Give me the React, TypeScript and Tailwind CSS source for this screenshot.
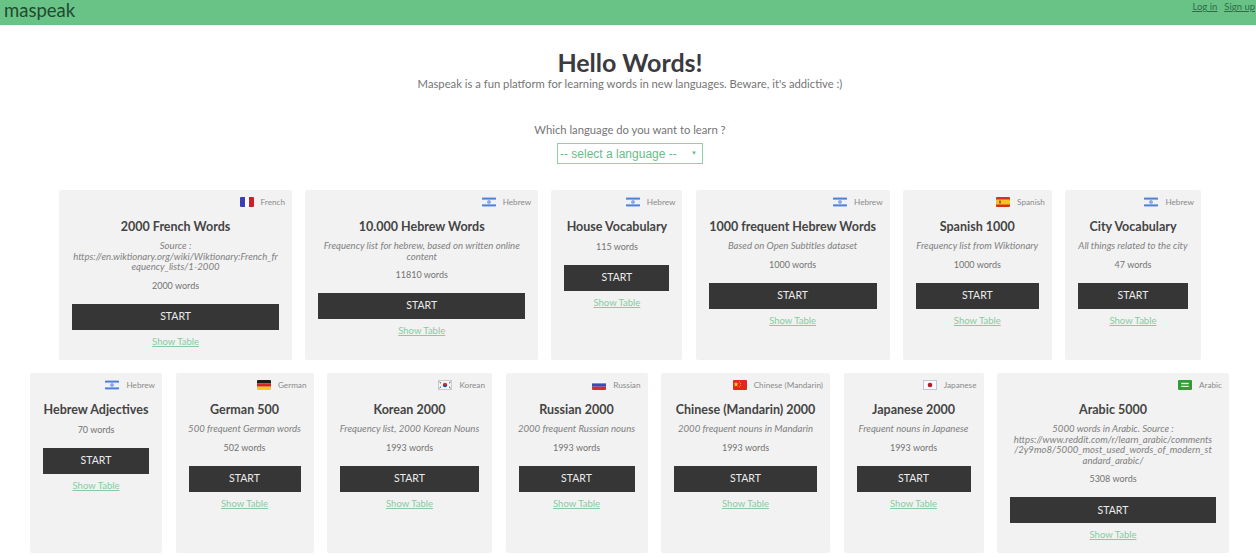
import React from "react";

type FlagKind = "fr" | "il" | "es" | "de" | "kr" | "ru" | "cn" | "jp" | "sa";

function Flag({ kind }: { kind: FlagKind }) {
  const inner: Record<FlagKind, React.ReactNode> = {
    fr: (<><rect width="14" height="10" fill="#fff" /><rect width="5" height="10" fill="#3b3fb5" /><rect x="9" width="5" height="10" fill="#c8202c" /></>),
    il: (<><rect width="14" height="10" fill="#eef1f8" /><rect y="0.6" width="14" height="2" fill="#4f7fd6" /><rect y="7.4" width="14" height="2" fill="#4f7fd6" /><path d="M7 3.2 8.5 6H5.5ZM7 6.8 5.5 4H8.5Z" fill="none" stroke="#4f7fd6" strokeWidth="0.5" /></>),
    es: (<><rect width="14" height="10" fill="#d5301f" /><rect y="2.5" width="14" height="5" fill="#f6c21c" /><rect x="3" y="3.6" width="2" height="2.8" fill="#b5521f" /></>),
    de: (<><rect width="14" height="3.4" fill="#1c1c1c" /><rect y="3.4" width="14" height="3.3" fill="#d8231f" /><rect y="6.7" width="14" height="3.3" fill="#f5c518" /></>),
    kr: (<><rect x="0.25" y="0.25" width="13.5" height="9.5" fill="#f5f5f5" stroke="#9aa3b0" strokeWidth="0.5" /><path d="M4.8 5a2.2 2.2 0 0 1 4.4 0Z" fill="#cd2e3a" /><path d="M4.8 5a2.2 2.2 0 0 0 4.4 0Z" fill="#1f4fa3" /><path d="M1.5 2 3 3.2M1.5 8 3 6.8M12.5 2 11 3.2M12.5 8 11 6.8" stroke="#333" strokeWidth="0.9" /></>),
    ru: (<><rect width="14" height="3.4" fill="#f4f4f8" /><rect y="3.4" width="14" height="3.3" fill="#3650b0" /><rect y="6.7" width="14" height="3.3" fill="#d3302c" /></>),
    cn: (<><rect width="14" height="10" fill="#e4261c" /><path d="M3 1.6 3.7 3.6 5.6 3.6 4 4.8 4.6 6.7 3 5.5 1.4 6.7 2 4.8 0.4 3.6 2.3 3.6Z" fill="#f7d21e" /><circle cx="6.6" cy="1.8" r="0.5" fill="#f7d21e" /><circle cx="7.4" cy="3.4" r="0.5" fill="#f7d21e" /><circle cx="7.4" cy="5.2" r="0.5" fill="#f7d21e" /><circle cx="6.6" cy="6.8" r="0.5" fill="#f7d21e" /></>),
    jp: (<><rect x="0.25" y="0.25" width="13.5" height="9.5" fill="#fafafa" stroke="#8d9ab5" strokeWidth="0.5" /><circle cx="7" cy="5" r="2.3" fill="#c3162c" /></>),
    sa: (<><rect width="14" height="10" fill="#2f9e36" /><rect x="3.2" y="2.8" width="7.6" height="1.4" fill="#e4f2e2" /><rect x="3.2" y="5.8" width="7.6" height="1.2" fill="#e4f2e2" /></>),
  };
  return (
    <svg width="14" height="10" viewBox="0 0 14 10" className="block rounded-[1px] shrink-0">
      {inner[kind]}
    </svg>
  );
}

type Card = { w: string; flag: FlagKind; lang: string; title: string; desc: string[]; words: string };

const rowOne: Card[] = [
  { w: "w-[233px]", flag: "fr", lang: "French", title: "2000 French Words", desc: ["Source :", "https://en.wiktionary.org/wiki/Wiktionary:French_fr", "equency_lists/1-2000"], words: "2000 words" },
  { w: "w-[233px]", flag: "il", lang: "Hebrew", title: "10.000 Hebrew Words", desc: ["Frequency list for hebrew, based on written online", "content"], words: "11810 words" },
  { w: "w-[131px]", flag: "il", lang: "Hebrew", title: "House Vocabulary", desc: [], words: "115 words" },
  { w: "w-[194px]", flag: "il", lang: "Hebrew", title: "1000 frequent Hebrew Words", desc: ["Based on Open Subtitles dataset"], words: "1000 words" },
  { w: "w-[149px]", flag: "es", lang: "Spanish", title: "Spanish 1000", desc: ["Frequency list from Wiktionary"], words: "1000 words" },
  { w: "w-[136px]", flag: "il", lang: "Hebrew", title: "City Vocabulary", desc: ["All things related to the city"], words: "47 words" },
];

const rowTwo: Card[] = [
  { w: "w-[132px]", flag: "il", lang: "Hebrew", title: "Hebrew Adjectives", desc: [], words: "70 words" },
  { w: "w-[138px]", flag: "de", lang: "German", title: "German 500", desc: ["500 frequent German words"], words: "502 words" },
  { w: "w-[165px]", flag: "kr", lang: "Korean", title: "Korean 2000", desc: ["Frequency list, 2000 Korean Nouns"], words: "1993 words" },
  { w: "w-[142px]", flag: "ru", lang: "Russian", title: "Russian 2000", desc: ["2000 frequent Russian nouns"], words: "1993 words" },
  { w: "w-[169px]", flag: "cn", lang: "Chinese (Mandarin)", title: "Chinese (Mandarin) 2000", desc: ["2000 frequent nouns in Mandarin"], words: "1993 words" },
  { w: "w-[140px]", flag: "jp", lang: "Japanese", title: "Japanese 2000", desc: ["Frequent nouns in Japanese"], words: "1993 words" },
  { w: "w-[232px]", flag: "sa", lang: "Arabic", title: "Arabic 5000", desc: ["5000 words in Arabic. Source :", "https://www.reddit.com/r/learn_arabic/comments", "/2y9mo8/5000_most_used_words_of_modern_st", "andard_arabic/"], words: "5308 words" },
];

function WordCard({ card, h }: { card: Card; h: string }) {
  return (
    <div className={`${card.w} ${h} shrink-0 bg-[#f2f2f2] rounded-[2px] pt-[7px] px-[13px] flex flex-col items-center`}>
      <div className="self-stretch -mr-[6px] h-[10px] flex items-center justify-end gap-[7px] text-[8.2px] text-[#8a8a8a] whitespace-nowrap">
        <Flag kind={card.flag} />
        <span>{card.lang}</span>
      </div>
      <div className="mt-[10px] h-[20px] leading-[20px] text-[12.5px] font-bold text-[#444444] whitespace-nowrap">{card.title}</div>
      {card.desc.length > 0 && (
        <div className="mt-[4px] text-[9.6px] leading-[10.6px] italic text-[#808080] text-center whitespace-nowrap">
          {card.desc.map((line) => (
            <div key={line}>{line}</div>
          ))}
        </div>
      )}
      <div className={`${card.desc.length > 0 ? "mt-[8px]" : "mt-[5px]"} h-[10px] leading-[10px] text-[9px] text-[#737373]`}>{card.words}</div>
      <button className="mt-[13px] h-[26px] w-full bg-[#363636] text-[#ececec] text-[10.5px]">START</button>
      <a className="mt-[7px] h-[10px] leading-[10px] text-[9.5px] text-[#86cba1] underline">Show Table</a>
    </div>
  );
}

export default function App() {
  return (
    <div className="w-[1256px] h-[558px] overflow-hidden bg-white font-['Lato','Noto_Sans',sans-serif]">
      <header className="h-[26px] bg-[#69c386] border-b border-[#eaf6ee] flex items-start justify-between pl-[4px] pr-px">
        <span className="text-[18.5px] leading-[20px] text-[#1e4a30]">maspeak</span>
        <div className="flex gap-[7px] pt-px text-[9.5px] leading-[11px] text-[#2f6b48] underline">
          <a>Log in</a>
          <a>Sign up</a>
        </div>
      </header>
      <section className="flex flex-col items-center pl-[4px]">
        <h1 className="mt-[21px] h-[30px] leading-[30px] text-[25px] font-bold text-[#3a3a40]">Hello Words!</h1>
        <p className="h-[14px] leading-[14px] text-[11.25px] text-[#757575]">
          Maspeak is a fun platform for learning words in new languages. Beware, it's addictive :)
        </p>
        <p className="mt-[32px] h-[14px] leading-[14px] text-[11.25px] text-[#757575]">Which language do you want to learn ?</p>
        <div className="mt-[6px] w-[146px] h-[21px] border border-[#8fd0a8] flex items-center justify-between pl-[2px] pr-[5px] font-['Liberation_Sans',sans-serif] text-[12px] text-[#6bbb89]">
          <span>-- select a language --</span>
          <span className="text-[6px]">▼</span>
        </div>
      </section>
      <section className="mt-[26px] flex flex-col gap-[13px]">
        <div className="flex justify-center gap-[13.2px] pl-[4px]">
          {rowOne.map((c) => (
            <WordCard key={c.title} card={c} h="h-[170px]" />
          ))}
        </div>
        <div className="flex justify-center gap-[13.5px] pl-[3px]">
          {rowTwo.map((c) => (
            <WordCard key={c.title} card={c} h="h-[180px]" />
          ))}
        </div>
      </section>
    </div>
  );
}
